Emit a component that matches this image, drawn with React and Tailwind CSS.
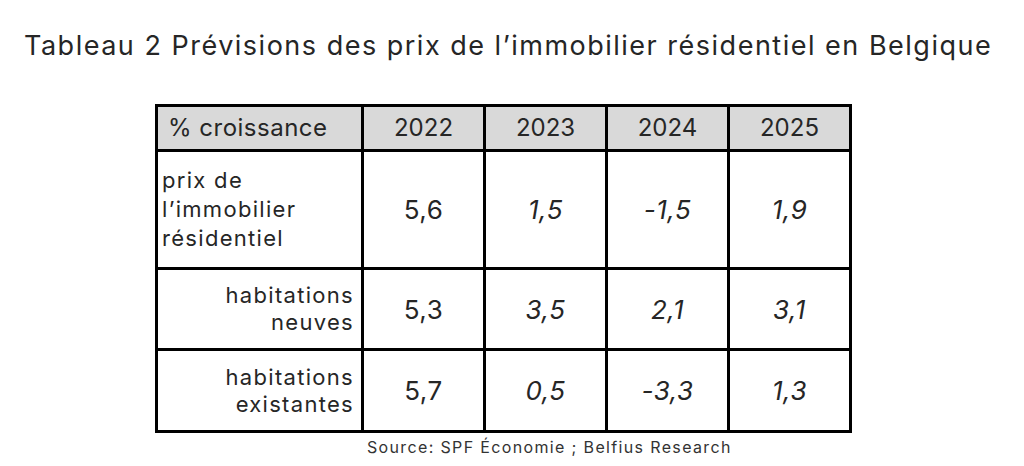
const rows = [
  { label: ['prix de', 'l’immobilier', 'résidentiel'], align: 'left', h: 'h-[118px]', values: ['5,6', '1,5', '-1,5', '1,9'] },
  { label: ['habitations', 'neuves'], align: 'right', h: 'h-[81px]', values: ['5,3', '3,5', '2,1', '3,1'] },
  { label: ['habitations', 'existantes'], align: 'right', h: 'h-[82px]', values: ['5,7', '0,5', '-3,3', '1,3'] },
];

const years = ['2022', '2023', '2024', '2025'];

export default function App() {
  return (
    <div className="w-[1024px] h-[466px] bg-white text-[#262626] font-['Inter',sans-serif] overflow-hidden">
      <h1 className="pl-[24px] pt-[30px] text-[27px] leading-[32px] tracking-[1.5px] font-normal">
        Tableau 2 Prévisions des prix de l’immobilier résidentiel en Belgique
      </h1>

      <table className="ml-[155px] mt-[42px] border-collapse border-[3px] border-black">
        <thead>
          <tr className="h-[45px] bg-[#d9d9d9]">
            <th className="w-[206px] border-[3px] border-black pl-[10px] text-left text-[24px] tracking-[0.5px] font-normal">
              % croissance
            </th>
            {years.map((y) => (
              <th key={y} className="w-[122px] border-[3px] border-black text-center text-[24px] font-normal">
                {y}
              </th>
            ))}
          </tr>
        </thead>
        <tbody>
          {rows.map((r, i) => (
            <tr key={i} className={r.h}>
              <td
                className={
                  r.align === 'left'
                    ? 'border-[3px] border-black pl-[4px] text-left text-[22px] leading-[29px] tracking-[1.3px]'
                    : 'border-[3px] border-black pr-[7px] text-right text-[22px] leading-[27px] tracking-[1.3px]'
                }
              >
                {r.label.map((l) => (
                  <div key={l}>{l}</div>
                ))}
              </td>
              {r.values.map((v, j) => (
                <td
                  key={j}
                  className={
                    j === 0
                      ? 'border-[3px] border-black text-center text-[26px] tracking-[0.5px]'
                      : 'border-[3px] border-black text-center text-[26px] tracking-[0.5px] italic'
                  }
                >
                  {v}
                </td>
              ))}
            </tr>
          ))}
        </tbody>
      </table>

      <p className="ml-[367px] mt-[4px] text-[16px] leading-[20px] tracking-[1.35px] text-[#333]">
        Source: SPF Économie ; Belfius Research
      </p>
    </div>
  );
}
